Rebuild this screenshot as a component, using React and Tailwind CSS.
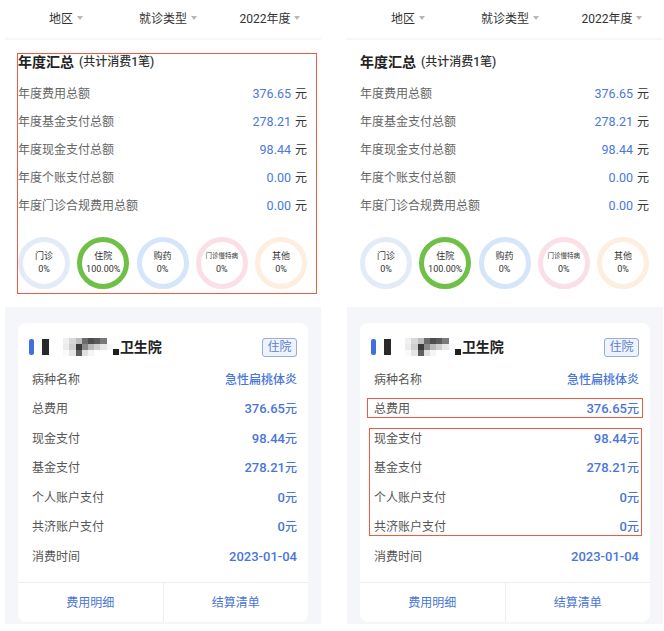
import React from "react";

const FONT = { fontFamily: 'Roboto, "Noto Sans CJK SC", "Noto Sans", sans-serif' };

function Caret() {
  return (
    <span className="inline-block ml-[4px] w-0 h-0 border-l-[3px] border-r-[3px] border-t-[4px] border-l-transparent border-r-transparent border-t-[#b8b8b8] translate-y-[-1px]" />
  );
}

function FilterBar() {
  return (
    <div className="h-[38px] pl-[10px] grid grid-cols-3 items-center bg-white text-[12px] text-[#333]">
      <div className="flex items-center justify-center">地区<Caret /></div>
      <div className="flex items-center justify-center">就诊类型<Caret /></div>
      <div className="flex items-center justify-center">2022年度<Caret /></div>
    </div>
  );
}

const summaryRows = [
  ["年度费用总额", "376.65"],
  ["年度基金支付总额", "278.21"],
  ["年度现金支付总额", "98.44"],
  ["年度个账支付总额", "0.00"],
  ["年度门诊合规费用总额", "0.00"],
];

const circles = [
  { label: "门诊", pct: "0%", ring: "border-[#e3ebf6]", small: false },
  { label: "住院", pct: "100.00%", ring: "border-[#6ec046]", small: false },
  { label: "购药", pct: "0%", ring: "border-[#d5e5fa]", small: false },
  { label: "门诊慢特病", pct: "0%", ring: "border-[#fbdfe6]", small: true },
  { label: "其他", pct: "0%", ring: "border-[#fdeedf]", small: false },
];

function Summary({ boxed }) {
  return (
    <div className="relative bg-white pt-[8px] pb-[18px] pl-[13px] pr-[14px]">
      <div className="h-[28px] flex items-center">
        <span className="text-[14px] font-bold text-[#222]">年度汇总</span>
        <span className="ml-[5px] text-[12px] font-medium text-[#333]">(共计消费1笔)</span>
      </div>
      <div className="mt-[4px]">
        {summaryRows.map(([l, v]) => (
          <div key={l} className="h-[28px] flex items-center justify-between">
            <span className="text-[12px] text-[#666]">{l}</span>
            <span className="flex items-center">
              <span className="text-[12.5px] text-[#4a78dc]">{v}</span>
              <span className="ml-[4px] text-[12px] text-[#333]">元</span>
            </span>
          </div>
        ))}
      </div>
      <div className="mt-[17px] flex justify-between">
        {circles.map((c) => (
          <div
            key={c.label}
            className={`w-[52px] h-[52px] rounded-full border-[5px] ${c.ring} flex flex-col items-center justify-center text-[#333]`}
          >
            <span className={c.small ? "text-[6.5px] leading-[13px]" : "text-[9px] leading-[13px]"}>{c.label}</span>
            <span className="text-[9px] leading-[13px]">{c.pct}</span>
          </div>
        ))}
      </div>
      {boxed && (
        <div className="absolute left-[12px] top-[13px] w-[300px] h-[241px] border-[1.5px] border-[#ef5a43] pointer-events-none" />
      )}
    </div>
  );
}

const mosaic = [
  ["#ffffff", "#f0f0f0", "#d8d8d8", "#bdbdbd", "#6b6b6b", "#4d4d4d", "#5a5a5a", "#7a7a7a", "#ffffff", "#ffffff"],
  ["#ffffff", "#ececec", "#cfcfcf", "#3a3a3a", "#8a8a8a", "#b9b9b9", "#d0d0d0", "#e8e8e8", "#f8f8f8", "#ffffff"],
  ["#ffffff", "#fafafa", "#e5e5e5", "#5e5e5e", "#e0e0e0", "#f5f5f5", "#ffffff", "#ffffff", "#ffffff", "#ffffff"],
];

function Mosaic() {
  return (
    <div className="flex flex-col ml-[8px]">
      {mosaic.map((row, i) => (
        <div key={i} className="flex">
          {row.map((c, j) => (
            <div key={j} className="w-[6.2px] h-[5.7px]" style={{ backgroundColor: c }} />
          ))}
        </div>
      ))}
    </div>
  );
}

const cardRows = [
  ["病种名称", "急性扁桃体炎", false],
  ["总费用", "376.65", true],
  ["现金支付", "98.44", true],
  ["基金支付", "278.21", true],
  ["个人账户支付", "0", true],
  ["共济账户支付", "0", true],
  ["消费时间", "2023-01-04", false],
];

function Card({ boxed }) {
  return (
    <div className="relative bg-white rounded-[8px]">
      <div className="pt-[12px] pl-[14px] pr-[11px] pb-[10.75px]">
        <div className="h-[24px] flex items-center justify-between">
          <div className="flex items-center">
            <div className="w-[5px] h-[16px] rounded-[2px] bg-[#3f6fe0] ml-[-3px]" />
            <div className="w-[7px] h-[16px] bg-[#2a2a2a] ml-[8px]" />
            <Mosaic />
            <div className="w-[6px] h-[6px] bg-[#1f1f1f] self-end mb-[3px] ml-[-6px]" />
            <span className="ml-[1px] text-[14px] font-semibold text-[#222]">卫生院</span>
          </div>
          <div className="w-[35px] h-[19px] flex items-center justify-center rounded-[3px] border border-[#97acdb] bg-[#eef3fc] text-[12px] text-[#5b7fcf]">
            住院
          </div>
        </div>
        <div className="mt-[5.75px]">
          {cardRows.map(([l, v, yuan]) => (
            <div key={l} className="h-[29.5px] flex items-center justify-between">
              <span className="text-[12px] text-[#555]">{l}</span>
              <span className="flex items-center text-[#4a76d9] font-medium">
                {yuan || /\d/.test(v) ? (
                  <span className="text-[13px]">{v}</span>
                ) : (
                  <span className="text-[12px]">{v}</span>
                )}
                {yuan && <span className="text-[12px]">元</span>}
              </span>
            </div>
          ))}
        </div>
      </div>
      <div className="h-[40px] flex border-t border-[#eeeeee] text-[12px] text-[#4a76d4]">
        <div className="flex-1 flex items-center justify-center border-r border-[#eeeeee]">费用明细</div>
        <div className="flex-1 flex items-center justify-center">结算清单</div>
      </div>
      {boxed && (
        <>
          <div className="absolute left-[7px] top-[75px] w-[276px] h-[20px] border-[1.5px] border-[#ef5a43] pointer-events-none" />
          <div className="absolute left-[9px] top-[105px] w-[273px] h-[108px] border-[1.5px] border-[#ef5a43] pointer-events-none" />
        </>
      )}
    </div>
  );
}

function Panel({ summaryBox, rowBoxes }) {
  return (
    <div className="w-[316px] shrink-0 flex flex-col">
      <FilterBar />
      <div className="h-[2px] bg-[#f6f7f9]" />
      <Summary boxed={summaryBox} />
      <div className="bg-[#f4f6fa] pt-[16px] px-[13px] pb-[2px]">
        <Card boxed={rowBoxes} />
      </div>
    </div>
  );
}

export default function App() {
  return (
    <div className="w-[664px] h-[631px] overflow-hidden bg-white flex pl-[5px] gap-[26px]" style={FONT}>
      <Panel summaryBox={true} rowBoxes={false} />
      <Panel summaryBox={false} rowBoxes={true} />
    </div>
  );
}
